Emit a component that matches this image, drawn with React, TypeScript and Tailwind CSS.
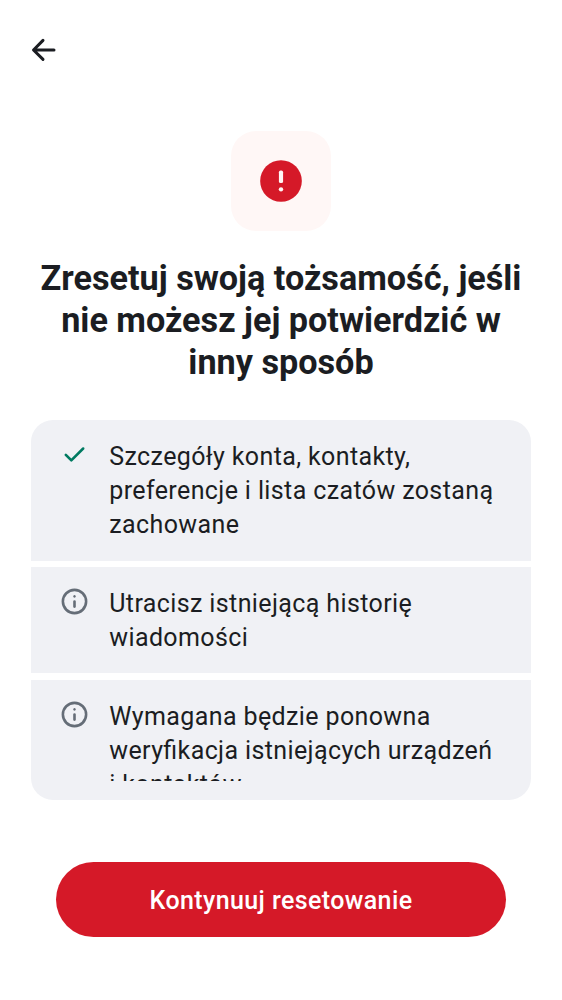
import React from 'react';

function InfoIcon() {
  return (
    <svg className="size-[31px]" viewBox="0 0 24 24" fill="#656d77">
      <path d="M11.288 16.712A.97.97 0 0 0 12 17q.424 0 .713-.288A.97.97 0 0 0 13 16v-4a.97.97 0 0 0-.287-.713A.97.97 0 0 0 12 11a.97.97 0 0 0-.713.287A.97.97 0 0 0 11 12v4q0 .424.287.712m0-8Q11.576 9 12 9t.713-.288A.97.97 0 0 0 13 8a.97.97 0 0 0-.287-.713A.97.97 0 0 0 12 7a.97.97 0 0 0-.713.287A.97.97 0 0 0 11 8q0 .424.287.713" />
      <path fillRule="evenodd" d="M12 22a10 10 0 1 1 0-20 10 10 0 0 1 0 20m0-2a8 8 0 1 0 0-16 8 8 0 0 0 0 16" />
    </svg>
  );
}

function CheckIcon() {
  return (
    <svg className="size-[31px]" viewBox="0 0 24 24" fill="#007a61">
      <path d="m9.55 15.15 8.475-8.475q.3-.3.7-.3t.7.3.3.713-.3.712l-9.175 9.2q-.3.3-.7.3t-.7-.3L4.55 13q-.3-.3-.288-.713.014-.412.313-.712t.713-.3.712.3z" />
    </svg>
  );
}

type RowProps = { icon: React.ReactNode; lines: string[]; className: string };

function Row({ icon, lines, className }: RowProps) {
  return (
    <li className={`flex gap-[18.9px] bg-[#f0f1f5] pl-[28.4px] pt-[19.2px] ${className}`}>
      <span className="shrink-0">{icon}</span>
      <p className="h-[calc(100%-19px)] overflow-hidden whitespace-nowrap pt-[0.5px] text-[25px] leading-[34.3px] tracking-[0.38px] [font-feature-settings:'liga'_1]">
        {lines.map((line) => (
          <span key={line} className="block">{line}</span>
        ))}
      </p>
    </li>
  );
}

export default function App() {
  return (
    <main className="flex h-[1000px] w-[562px] flex-col bg-white px-[31px] font-[Roboto,sans-serif] text-[#1b1d22]">
      <header className="h-[131px] shrink-0 pt-[34px]">
        <button aria-label="Wstecz" className="-ml-[3px] block">
          <svg className="size-[32px]" viewBox="0 0 32 32" fill="none" stroke="#1b1d22" strokeWidth="3" strokeLinecap="round" strokeLinejoin="round">
            <path d="M15 6.4 5.5 16l9.5 9.4M6 16h20" />
          </svg>
        </button>
      </header>
      <div className="flex size-[100px] shrink-0 items-center justify-center self-center rounded-[25px] bg-[#fff7f6]">
        <svg className="size-[50px]" viewBox="0 0 24 24" fill="#d51928">
          <circle cx="12" cy="12" r="10" />
          <rect x="11" y="7" width="2" height="6" rx="0.8" fill="#fff7f6" />
          <circle cx="12" cy="16" r="1.05" fill="#fff7f6" />
        </svg>
      </div>
      <h1 className="mt-[26px] whitespace-nowrap text-center text-[34.2px] font-bold leading-[42px]">
        Zresetuj swoją tożsamość, jeśli<br />nie możesz jej potwierdzić w<br />inny sposób
      </h1>
      <ul className="mt-[37px] flex flex-col">
        <Row className="h-[141px] rounded-t-[22px]" icon={<CheckIcon />} lines={['Szczegóły konta, kontakty,', 'preferencje i lista czatów zostaną', 'zachowane']} />
        <Row className="mt-[6px] h-[106px]" icon={<InfoIcon />} lines={['Utracisz istniejącą historię', 'wiadomości']} />
        <Row className="mt-[7px] h-[120px] rounded-b-[22px]" icon={<InfoIcon />} lines={['Wymagana będzie ponowna', 'weryfikacja istniejących urządzeń', 'i kontaktów']} />
      </ul>
      <button className="mx-[25px] mt-[62.4px] h-[75px] shrink-0 rounded-full bg-[#d51928] pt-px text-[25px] font-medium tracking-[0.4px] text-white">
        Kontynuuj resetowanie
      </button>
    </main>
  );
}
